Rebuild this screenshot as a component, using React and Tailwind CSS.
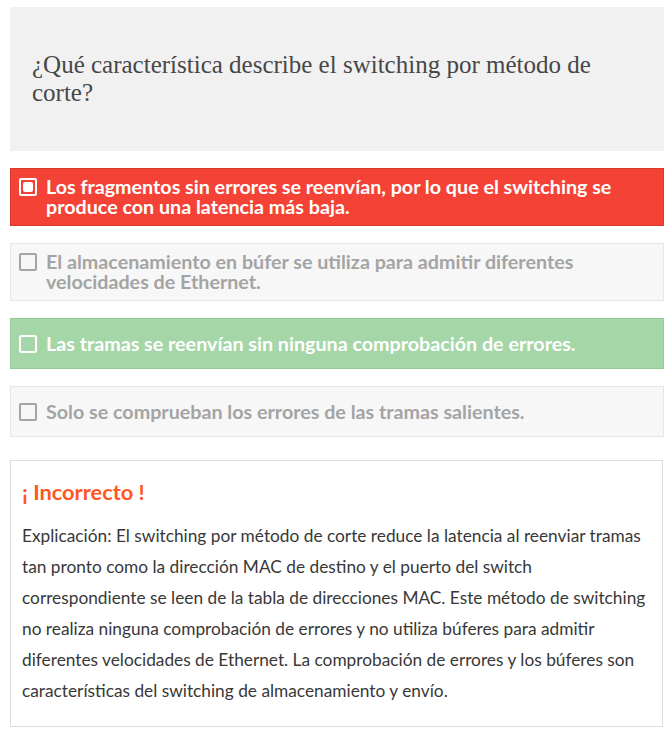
import React from 'react';

const options = [
  { text: 'Los fragmentos sin errores se reenvían, por lo que el switching se produce con una latencia más baja.', state: 'wrong', checked: true, multi: true },
  { text: 'El almacenamiento en búfer se utiliza para admitir diferentes velocidades de Ethernet.', state: 'idle', multi: true },
  { text: 'Las tramas se reenvían sin ninguna comprobación de errores.', state: 'right' },
  { text: 'Solo se comprueban los errores de las tramas salientes.', state: 'idle' },
];

const boxStyle = {
  wrong: 'bg-[#f44336] border-[#d9382d] text-white',
  right: 'bg-[#a5d6a7] border-[#93cc96] text-white',
  idle: 'bg-[#f7f7f7] border-[#e6e6e6] text-[#a4a4a4]',
};

const tickStyle = {
  wrong: 'border-white',
  right: 'border-white',
  idle: 'border-[#a4a4a4]',
};

function Option({ text, state, checked, multi }) {
  return (
    <div className={`flex min-h-[51px] py-[8px] pl-[8px] pr-[40px] border ${multi ? 'items-start' : 'items-center'} ${boxStyle[state]}`}>
      <span className={`shrink-0 mt-[1px] w-[18px] h-[18px] border-2 rounded-[2px] flex items-center justify-center ${tickStyle[state]}`}>
        {checked && <span className="w-[10px] h-[10px] bg-white rounded-[2px]" />}
      </span>
      <span className="ml-[9px] text-[19.7px] leading-[20px] font-bold">{text}</span>
    </div>
  );
}

export default function App() {
  return (
    <div className="bg-white px-[10px] pt-[7px] pb-[12px] w-[674px]" style={{ fontFamily: 'Lato, "Open Sans", sans-serif' }}>
      {/* Question */}
      <div className="bg-[#f1f1f1] h-[144px] flex items-center px-[22px] w-[654px]">
        <h2
          className="text-[25px] leading-[28px] text-[#474747]"
          style={{ fontFamily: '"Liberation Serif", "DejaVu Serif", serif' }}
        >
          ¿Qué característica describe el switching por método de corte?
        </h2>
      </div>

      {/* Options */}
      <div className="mt-[17px] w-[654px] flex flex-col gap-[17px]">
        {options.map((o, i) => (
          <Option key={i} {...o} />
        ))}
      </div>

      {/* Explanation */}
      <div className="mt-[23px] w-[653px] border border-[#dcdcdc] pl-[11px] pr-[8px] pt-[17px] pb-[20px]">
        <p className="text-[21.8px] font-bold text-[#ff5722] leading-[28px]">¡ Incorrecto !</p>
        <p className="mt-[14px] text-[17.3px] leading-[31px] text-[#383838]">
          Explicación: El switching por método de corte reduce la latencia al reenviar tramas tan pronto como la dirección MAC de destino y el puerto del switch correspondiente se leen de la tabla de direcciones MAC. Este método de switching no realiza ninguna comprobación de errores y no utiliza búferes para admitir diferentes velocidades de Ethernet. La comprobación de errores y los búferes son características del switching de almacenamiento y envío.
        </p>
      </div>
    </div>
  );
}
